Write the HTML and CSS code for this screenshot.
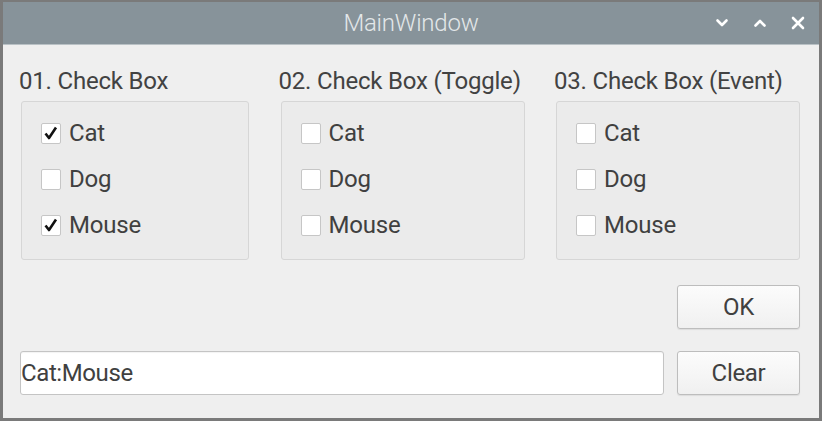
FILE: index.html
```html
<!DOCTYPE html>
<html>
<head>
<meta charset="utf-8">
<link rel="stylesheet" href="styles.css">
</head>
<body>
<div class="window">
  <div class="titlebar">
    <div class="title">MainWindow</div>
    <div class="controls">
      <svg class="ctl" width="14" height="14" viewBox="0 0 14 14"><path d="M2.5 4.5 L7 9 L11.5 4.5" fill="none" stroke="#fff" stroke-width="2.6" stroke-linecap="round" stroke-linejoin="round"/></svg>
      <svg class="ctl" width="14" height="14" viewBox="0 0 14 14"><path d="M2.5 9.5 L7 5 L11.5 9.5" fill="none" stroke="#fff" stroke-width="2.6" stroke-linecap="round" stroke-linejoin="round"/></svg>
      <svg class="ctl" width="14" height="14" viewBox="0 0 14 14"><path d="M2 2 L12 12 M12 2 L2 12" fill="none" stroke="#fff" stroke-width="2.6" stroke-linecap="round"/></svg>
    </div>
  </div>
  <div class="content">
    <div class="groups">
      <div class="group">
        <div class="gtitle">01. Check Box</div>
        <div class="gbox">
          <div class="row"><span class="cb"><svg width="20" height="20" viewBox="0 0 20 20"><path d="M4.5 10.5 L8 15 L15 4.5" fill="none" stroke="#111" stroke-width="2.6" stroke-linejoin="round"/></svg></span><span class="lbl">Cat</span></div>
          <div class="row"><span class="cb"></span><span class="lbl">Dog</span></div>
          <div class="row"><span class="cb"><svg width="20" height="20" viewBox="0 0 20 20"><path d="M4.5 10.5 L8 15 L15 4.5" fill="none" stroke="#111" stroke-width="2.6" stroke-linejoin="round"/></svg></span><span class="lbl">Mouse</span></div>
        </div>
      </div>
      <div class="group">
        <div class="gtitle">02. Check Box (Toggle)</div>
        <div class="gbox">
          <div class="row"><span class="cb"></span><span class="lbl">Cat</span></div>
          <div class="row"><span class="cb"></span><span class="lbl">Dog</span></div>
          <div class="row"><span class="cb"></span><span class="lbl">Mouse</span></div>
        </div>
      </div>
      <div class="group">
        <div class="gtitle">03. Check Box (Event)</div>
        <div class="gbox">
          <div class="row"><span class="cb"></span><span class="lbl">Cat</span></div>
          <div class="row"><span class="cb"></span><span class="lbl">Dog</span></div>
          <div class="row"><span class="cb"></span><span class="lbl">Mouse</span></div>
        </div>
      </div>
    </div>
    <div class="okrow">
      <div class="btn">OK</div>
    </div>
    <div class="inrow">
      <div class="field">Cat:Mouse</div>
      <div class="btn">Clear</div>
    </div>
  </div>
</div>
</body>
</html>
```
FILE: styles.css
```css
html, body {
  margin: 0;
  padding: 0;
  background: #efefef;
}
.window {
  width: 822px;
  height: 421px;
  box-sizing: border-box;
  border: 3px solid #7a7a7a;
  border-top-width: 2px;
  background: #efefef;
  font-family: Roboto, "Liberation Sans", sans-serif;
  color: #404040;
  display: flex;
  flex-direction: column;
}
.titlebar {
  height: 42px;
  background: #87939a;
  border-bottom: 1px solid #b9c1c5;
  position: relative;
  display: flex;
  align-items: center;
  justify-content: center;
  flex: none;
}
.title {
  font-size: 24px;
  font-weight: 300;
  color: #e3e7e9;
  line-height: 28px;
  letter-spacing: -0.2px;
}
.controls {
  position: absolute;
  right: 14px;
  top: 14px;
  display: flex;
  gap: 24px;
}
.ctl {
  display: block;
}
.content {
  padding: 22px 19px 0 17px;
  display: flex;
  flex-direction: column;
}
.groups {
  display: grid;
  grid-template-columns: 228px 244px 244px;
  column-gap: 31.5px;
  padding-left: 1px;
}
.gtitle {
  font-size: 24px;
  line-height: 28px;
  margin-left: -2px;
  margin-bottom: 6px;
  white-space: nowrap;
  letter-spacing: -0.2px;
  color: #424242;
}
.gbox {
  border: 1px solid #d6d6d6;
  border-radius: 3px;
  background: #ebebeb;
  padding: 8px 0 11px 19px;
}
.row {
  height: 46px;
  display: flex;
  align-items: center;
}
.cb {
  width: 18px;
  height: 19px;
  border: 1px solid #c6c6c6;
  border-radius: 2px;
  background: #fff;
  margin-right: 8px;
  position: relative;
  flex: none;
}
.cb svg {
  position: absolute;
  left: -1px;
  top: -1px;
}
.lbl {
  font-size: 24px;
  line-height: 28px;
  letter-spacing: -0.2px;
  color: #404040;
}
.okrow {
  display: flex;
  justify-content: flex-end;
  margin-top: 25px;
}
.inrow {
  display: flex;
  justify-content: space-between;
  align-items: center;
  margin-top: 22px;
}
.btn {
  width: 121px;
  height: 42px;
  border: 1px solid #bdbdbd;
  border-radius: 3px;
  background: linear-gradient(#fcfcfc, #f0f0f0);
  box-shadow: 0 1px 1px rgba(0,0,0,0.08);
  display: flex;
  align-items: center;
  justify-content: center;
  font-size: 24px;
  line-height: 28px;
  letter-spacing: -0.3px;
  color: #404040;
}
.field {
  width: 642px;
  height: 42px;
  border: 1px solid #c4c4c4;
  border-radius: 3px;
  background: #fff;
  box-shadow: inset 0 1px 1px rgba(0,0,0,0.05);
  display: flex;
  align-items: center;
  padding-left: 0px;
  font-size: 24px;
  line-height: 28px;
  letter-spacing: -0.4px;
  color: #404040;
}
```
